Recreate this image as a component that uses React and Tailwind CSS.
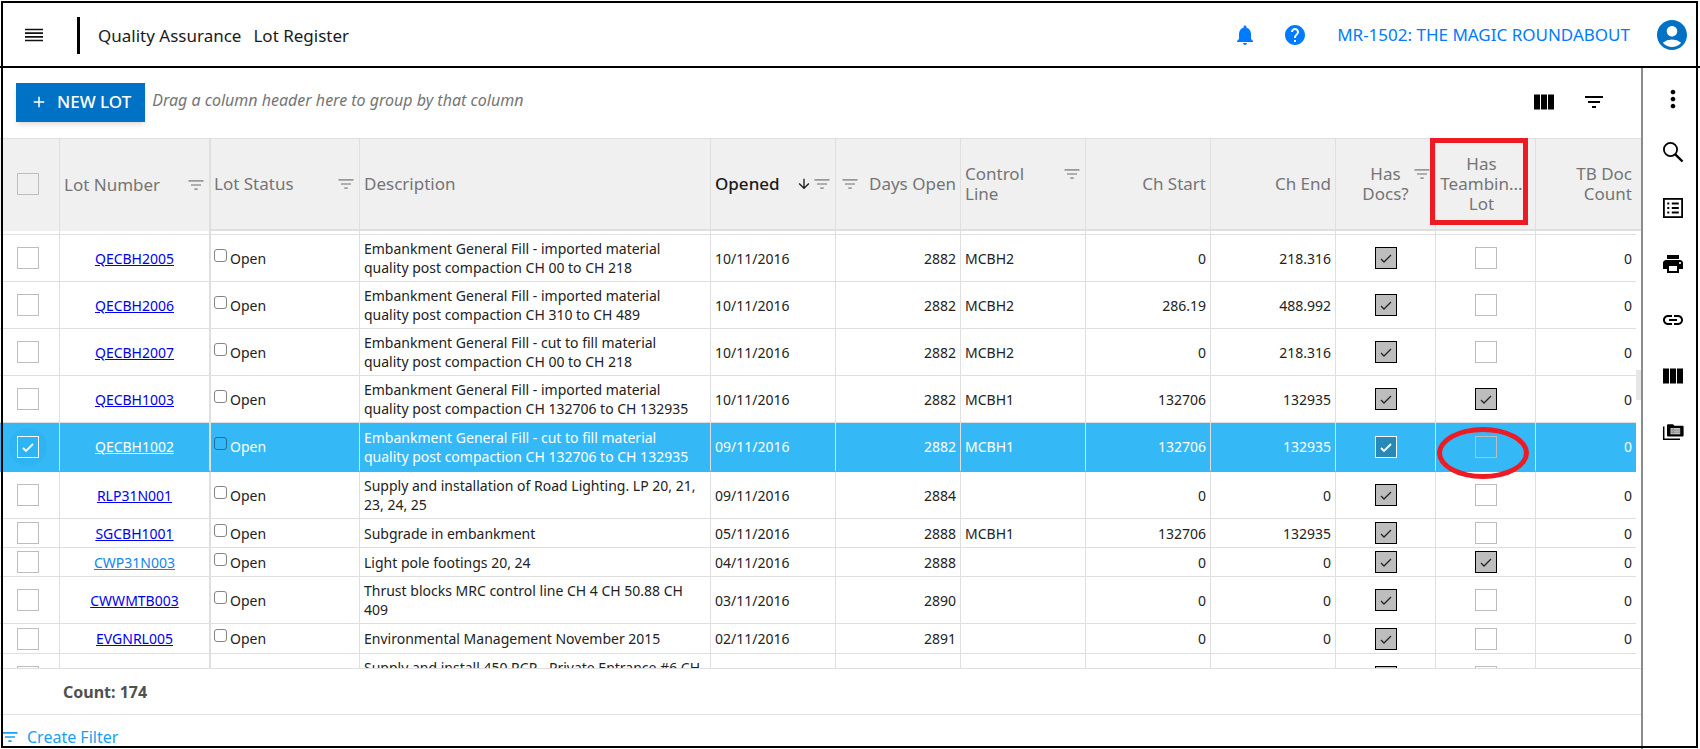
import { useState } from 'react';
import { MdNotifications, MdHelp, MdAccountCircle, MdMoreVert, MdPrint, MdLink, MdFilterList, MdAdd, MdArrowDownward } from 'react-icons/md';

const HEADERS = [
  { label: 'Lot Number', align: 'left', filter: true },
  { label: 'Lot Status', align: 'left', filter: true },
  { label: 'Description', align: 'left' },
  { label: 'Opened', align: 'left', filter: true, sorted: true },
  { label: 'Days Open', align: 'right', filter: true },
  { label: 'Control\nLine', align: 'left', filter: true },
  { label: 'Ch Start', align: 'right' },
  { label: 'Ch End', align: 'right' },
  { label: 'Has\nDocs?', align: 'center', filter: true },
  { label: 'Has\nTeambin...\nLot', align: 'center', marked: true },
  { label: 'TB Doc\nCount', align: 'right' },
];

const LOTS = [
  { id: 'QECBH2005', desc: 'Embankment General Fill - imported material quality post compaction CH 00 to CH 218', opened: '10/11/2016', days: 2882, line: 'MCBH2', start: '0', end: '218.316', docs: true, h: 'h-[47px]' },
  { id: 'QECBH2006', desc: 'Embankment General Fill - imported material quality post compaction CH 310 to CH 489', opened: '10/11/2016', days: 2882, line: 'MCBH2', start: '286.19', end: '488.992', docs: true, h: 'h-[47px]' },
  { id: 'QECBH2007', desc: 'Embankment General Fill - cut to fill material quality post compaction CH 00 to CH 218', opened: '10/11/2016', days: 2882, line: 'MCBH2', start: '0', end: '218.316', docs: true, h: 'h-[47px]' },
  { id: 'QECBH1003', desc: 'Embankment General Fill - imported material quality post compaction CH 132706 to CH 132935', opened: '10/11/2016', days: 2882, line: 'MCBH1', start: '132706', end: '132935', docs: true, teambinder: true, h: 'h-[47px]' },
  { id: 'QECBH1002', desc: 'Embankment General Fill - cut to fill material quality post compaction CH 132706 to CH 132935', opened: '09/11/2016', days: 2882, line: 'MCBH1', start: '132706', end: '132935', docs: true, marked: true, h: 'h-[49px]' },
  { id: 'RLP31N001', desc: 'Supply and installation of Road Lighting. LP 20, 21, 23, 24, 25', opened: '09/11/2016', days: 2884, line: '', start: '0', end: '0', docs: true, h: 'h-[47px]' },
  { id: 'SGCBH1001', desc: 'Subgrade in embankment', opened: '05/11/2016', days: 2888, line: 'MCBH1', start: '132706', end: '132935', docs: true, h: 'h-[29px]' },
  { id: 'CWP31N003', desc: 'Light pole footings 20, 24', opened: '04/11/2016', days: 2888, line: '', start: '0', end: '0', docs: true, teambinder: true, visited: true, h: 'h-[29px]' },
  { id: 'CWWMTB003', desc: 'Thrust blocks MRC control line CH 4 CH 50.88 CH 409', opened: '03/11/2016', days: 2890, line: '', start: '0', end: '0', docs: true, h: 'h-[47px]' },
  { id: 'EVGNRL005', desc: 'Environmental Management November 2015', opened: '02/11/2016', days: 2891, line: '', start: '0', end: '0', docs: true, h: 'h-[30px]' },
  { id: 'SWD450001', desc: 'Supply and install 450 RCP - Private Entrance #6 CH 1210', opened: '01/11/2016', days: 2892, line: '', start: '0', end: '0', docs: true, h: 'h-[47px]' },
];

function MenuIcon() {
  return (
    <svg viewBox="0 0 18 14" className="w-[18px] h-[14px]" stroke="#111" strokeWidth="1.700" aria-hidden="true">
      <path d="M0 1.500h18M0 5.200h18M0 8.900h18M0 12.500h18" />
    </svg>
  );
}

function ColumnsIcon() {
  return (
    <svg viewBox="0 0 24 24" className="w-6 h-6" fill="currentColor" aria-hidden="true">
      <path d="M2 4.500h6v15H2zM9 4.500h6v15H9zM16 4.500h6v15h-6z" />
    </svg>
  );
}

function SearchIcon() {
  return (
    <svg viewBox="0 0 24 24" className="w-6 h-6" fill="none" stroke="currentColor" aria-hidden="true">
      <circle cx="9.500" cy="9.500" r="6.600" strokeWidth="1.800" />
      <path d="M14.300 14.300l7.200 7.200" strokeWidth="2.400" />
    </svg>
  );
}

function ListIcon() {
  return (
    <svg viewBox="0 0 24 24" className="w-6 h-6" fill="none" stroke="currentColor" aria-hidden="true">
      <rect x="2.900" y="2.900" width="18.200" height="18.200" strokeWidth="1.800" />
      <path d="M6.300 7.500h2M10.800 7.500h7M6.300 12h2M10.800 12h7M6.300 16.500h2M10.800 16.500h7" strokeWidth="1.800" />
    </svg>
  );
}

function FolderListIcon() {
  return (
    <svg viewBox="0 0 24 24" className="w-6 h-6" aria-hidden="true">
      <path d="M2.700 6.500v12.800H19" fill="none" stroke="currentColor" strokeWidth="1.500" />
      <path d="M7 4.300h5l1.500 1.500h8.200c.5 0 .9.400.9.900v8.800c0 .5-.4.900-.9.900H6.900c-.5 0-.9-.4-.9-.9V5.200c0-.5.400-.9 1-.9z" fill="currentColor" />
      <path d="M9.500 8h9.700v6.300H9.500z" fill="#c4c4c4" />
      <path d="M9.500 10h9.700M9.500 12.200h9.700M12.200 8v6.300" stroke="#777" strokeWidth=".7" />
    </svg>
  );
}

function Check({ checked, onChange, label, variant }) {
  const styles = {
    plain: 'border-[#bdbdbd]',
    on: 'border-black bg-[#bdbdbd]',
    selected: 'border-white',
    selectedOn: 'border-white bg-[#2789b8]',
  };
  return (
    <span className="relative inline-block w-[22px] h-[22px] align-middle">
      <input type="checkbox" checked={checked} onChange={onChange} readOnly={!onChange} aria-label={label}
        className={`block appearance-none w-full h-full border ${styles[variant]}`} />
      {checked && (
        <svg viewBox="0 0 22 22" className={`absolute inset-0 pointer-events-none ${variant === 'on' ? 'text-[#222]' : 'text-white'}`}
          fill="none" stroke="currentColor" strokeWidth={variant === 'on' ? 1.3 : 1.8} aria-hidden="true">
          <path d="M6 12l3 3 7-7" />
        </svg>
      )}
    </span>
  );
}

function HeaderCell({ col, index }) {
  const border = index === 0 ? 'border-r-2' : index === 10 ? '' : 'border-r';
  const bottom = index === 0 ? '' : 'border-b-2';
  const icon = col.filter && (
    <button aria-label={`Filter ${col.label}`} className="text-[#999] shrink-0">
      <MdFilterList className="w-5 h-5" />
    </button>
  );
  const text = <span className={`whitespace-pre-line ${col.sorted ? 'text-[#1b1b1b] font-medium' : ''}`}>{col.label}</span>;

  return (
    <th scope="col" className={`relative h-[93px] p-0 font-normal border-t border-[#dfdfdf] bg-[#f0f0f0] ${border} ${bottom}`}>
      {col.align === 'left' && (
        <div className={`flex items-start justify-between pr-[3px] text-left ${index === 1 ? 'pl-[3px]' : 'pl-1'}`}>
          {text}
          <span className="flex">
            {col.sorted && <MdArrowDownward className="w-4 h-5 text-[#1b1b1b]" />}
            {icon}
          </span>
        </div>
      )}
      {col.align === 'right' && (
        <div className={`flex items-start px-1 text-right ${icon ? 'justify-between' : 'justify-end'}`}>
          {icon}
          {text}
        </div>
      )}
      {col.align === 'center' && (
        <div className={`grid grid-cols-[1fr_auto_1fr] text-center ${col.marked ? 'pr-2' : ''}`}>
          <span />
          {text}
          <span className="flex items-start justify-end pr-[3px]">{icon}</span>
        </div>
      )}
      {col.marked && <span className="absolute -left-[6px] -top-px w-[98px] h-[87px] border-[5px] border-[#ed1c24] z-10 pointer-events-none" />}
    </th>
  );
}

function LotRow({ lot, selected, onToggle }) {
  const cell = `${selected ? 'border-b-2 border-b-[#35b8f6]' : 'border-b border-b-[#dfdfdf]'} border-r border-r-[#dfdfdf] px-1 py-0`;
  const linkColor = selected ? 'text-white' : lot.visited ? 'text-[#0d86f5]' : 'text-[#0000ee]';
  return (
    <tr className={`${lot.h} ${selected ? 'bg-[#35b8f6] text-white' : 'text-[#222]'}`}>
      <td className={`${cell} pl-[17px]`}>
        <span className={`flex items-center justify-center w-[22px] h-[22px] rounded-full ${selected ? 'bg-[#2fb4f3] ring-8 ring-[#2fb4f3]' : ''}`}>
          <Check checked={selected} onChange={onToggle} label={`Select ${lot.id}`} variant={selected ? 'selected' : 'plain'} />
        </span>
      </td>
      <td className={`${cell} border-r-2 text-center`}>
        <a href={`#${lot.id}`} className={`underline ${linkColor}`}>{lot.id}</a>
      </td>
      <td className={`${cell} pl-[3px]`}>
        <label className="flex items-start gap-[3px]">
          <input type="checkbox" className={`appearance-none w-[13px] h-[13px] rounded-[3px] border ${selected ? 'border-[#1c6f9a]' : 'border-[#858585] bg-white'}`} />
          Open
        </label>
      </td>
      <td className={`${cell} pr-2`}>{lot.desc}</td>
      <td className={cell}>{lot.opened}</td>
      <td className={`${cell} text-right`}>{lot.days}</td>
      <td className={cell}>{lot.line}</td>
      <td className={`${cell} text-right`}>{lot.start}</td>
      <td className={`${cell} text-right`}>{lot.end}</td>
      <td className={`${cell} text-center leading-none`}>
        <Check checked={lot.docs} label={`${lot.id} has docs`} variant={selected ? 'selectedOn' : 'on'} />
      </td>
      <td className={`${cell} relative text-center leading-none`}>
        <Check checked={!!lot.teambinder} label={`${lot.id} has Teambinder lot`} variant={lot.teambinder ? 'on' : 'plain'} />
        {lot.marked && <span className="absolute left-px top-1 w-[92px] h-[52px] rounded-[50%] border-[5px] border-[#ed1c24] z-10 pointer-events-none" />}
      </td>
      <td className={`${cell} border-r-0 text-right`}>0</td>
      <td className="bg-white p-0" />
    </tr>
  );
}

export default function App() {
  const [selectedId, setSelectedId] = useState('QECBH1002');

  return (
    <div className="relative flex flex-col h-screen overflow-hidden bg-white font-['Noto_Sans','Open_Sans',sans-serif] text-[#222]">
      <header className="flex items-center h-[68px] shrink-0 border-b-2 border-black pl-[25px] pr-[10px] pt-1">
        <button aria-label="Menu"><MenuIcon /></button>
        <span className="w-[3px] h-[37px] ml-[34px] mr-[18px] bg-black" />
        <nav className="flex gap-3 pt-[2px] text-[17px] text-[#1b1b1b]">
          <span>Quality Assurance</span>
          <span>Lot Register</span>
        </nav>
        <div className="flex items-center ml-auto text-[#007bff]">
          <button aria-label="Notifications"><MdNotifications className="w-6 h-6" /></button>
          <button aria-label="Help" className="ml-[26px]"><MdHelp className="w-6 h-6" /></button>
          <a href="#project" className="ml-[30px] text-[17px]">MR-1502: THE MAGIC ROUNDABOUT</a>
          <button aria-label="Account" className="ml-6 text-[#0072c6]"><MdAccountCircle className="w-9 h-9" /></button>
        </div>
      </header>

      <div className="flex flex-1 min-h-0">
        <main className="flex flex-col flex-1 min-w-0">
          <div className="flex items-center h-[70px] shrink-0 pl-4 pr-[35px] pb-[2px]">
            <button className="flex items-center gap-[9px] h-[39px] px-[14px] bg-[#0072c6] text-white text-[17px] font-medium shadow-md">
              <MdAdd className="w-[18px] h-[18px]" />
              NEW LOT
            </button>
            <span className="ml-[7px] pb-1 text-base italic text-[#757575]">Drag a column header here to group by that column</span>
            <div className="flex gap-[26px] ml-auto text-black">
              <button aria-label="Column chooser"><ColumnsIcon /></button>
              <button aria-label="Filter"><MdFilterList className="w-6 h-6" /></button>
            </div>
          </div>

          <div className="relative flex-1 min-h-0 overflow-hidden">
            <table className="w-full table-fixed border-separate border-spacing-0 text-sm leading-[19px]">
              <colgroup>
                <col className="w-[60px]" />
                <col className="w-[151px]" />
                <col className="w-[149px]" />
                <col />
                <col className="w-[125px]" />
                <col className="w-[125px]" />
                <col className="w-[125px]" />
                <col className="w-[125px]" />
                <col className="w-[125px]" />
                <col className="w-[100px]" />
                <col className="w-[100px]" />
                <col className="w-[100px]" />
                <col className="w-[5px]" />
              </colgroup>
              <thead className="text-[17px] leading-5 text-[#757575]">
                <tr>
                  <th scope="col" className="p-0 pl-[17px] pb-[2px] text-left border-t border-r border-[#dfdfdf] bg-[#f0f0f0]">
                    <Check checked={false} label="Select all" variant="plain" />
                  </th>
                  {HEADERS.map((col, i) => <HeaderCell key={col.label} col={col} index={i} />)}
                  <td className="p-0 border-t border-b-2 border-[#dfdfdf] bg-[#f0f0f0]" />
                </tr>
              </thead>
              <tbody>
                <tr className="h-1">
                  {Array.from({ length: 12 }, (_, i) => (
                    <td key={i} className={`p-0 border-b border-[#dfdfdf] ${i === 1 ? 'border-r-2' : i === 11 ? '' : 'border-r'}`} />
                  ))}
                </tr>
                {LOTS.map(lot => (
                  <LotRow key={lot.id} lot={lot} selected={lot.id === selectedId}
                    onToggle={() => setSelectedId(lot.id === selectedId ? null : lot.id)} />
                ))}
              </tbody>
            </table>
            <span className="absolute right-0 top-[232px] w-[5px] h-[30px] bg-[#e6e6e6]" />
          </div>

          <div className="flex items-center h-[46px] shrink-0 pl-[63px] border-t border-[#dfdfdf] text-base font-bold text-[#505050]">
            Count: 174
          </div>
          <div className="h-[35px] shrink-0 border-t border-[#dfdfdf]">
            <button className="flex items-center gap-[7px] pt-[10px] text-base text-[#1aa0f0]">
              <MdFilterList className="w-5 h-5" />
              Create Filter
            </button>
          </div>
        </main>

        <aside className="flex flex-col items-center gap-8 w-[59px] shrink-0 border-l-2 border-[#8c8c8c] pl-[2px] pt-[17px] text-black">
          <button aria-label="More" className="-mb-[5px]"><MdMoreVert className="w-7 h-7" /></button>
          <button aria-label="Search"><SearchIcon /></button>
          <button aria-label="Details"><ListIcon /></button>
          <button aria-label="Print"><MdPrint className="w-6 h-6" /></button>
          <button aria-label="Link"><MdLink className="w-6 h-6" /></button>
          <button aria-label="Columns"><ColumnsIcon /></button>
          <button aria-label="Documents"><FolderListIcon /></button>
        </aside>
      </div>

      <div className="absolute left-px right-[2px] top-px bottom-px border-2 border-black pointer-events-none z-20" />
    </div>
  );
}
